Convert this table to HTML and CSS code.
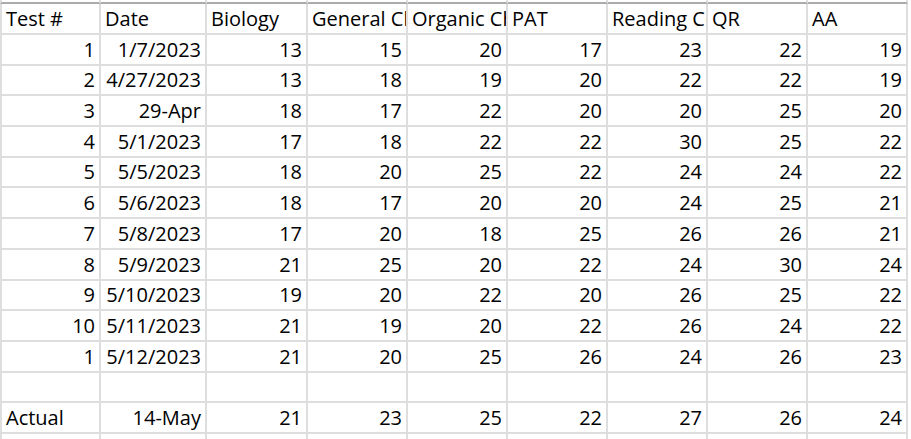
FILE: index.html
```html
<!DOCTYPE html>
<html>
<head>
<meta charset="utf-8">
<link rel="stylesheet" href="styles.css">
</head>
<body>
<div class="sheet">
  <div class="c top first"></div><div class="c top"></div><div class="c top"></div><div class="c top"></div><div class="c top"></div><div class="c top"></div><div class="c top"></div><div class="c top"></div><div class="c top"></div>

  <div class="c first l">Test #</div><div class="c l">Date</div><div class="c l">Biology</div><div class="c l">General Chemistry</div><div class="c l">Organic Chemistry</div><div class="c l">PAT</div><div class="c l">Reading Comprehension</div><div class="c l">QR</div><div class="c l">AA</div>

  <div class="c first r">1</div><div class="c r">1/7/2023</div><div class="c r">13</div><div class="c r">15</div><div class="c r">20</div><div class="c r">17</div><div class="c r">23</div><div class="c r">22</div><div class="c r">19</div>
  <div class="c first r">2</div><div class="c r">4/27/2023</div><div class="c r">13</div><div class="c r">18</div><div class="c r">19</div><div class="c r">20</div><div class="c r">22</div><div class="c r">22</div><div class="c r">19</div>
  <div class="c first r">3</div><div class="c r">29-Apr</div><div class="c r">18</div><div class="c r">17</div><div class="c r">22</div><div class="c r">20</div><div class="c r">20</div><div class="c r">25</div><div class="c r">20</div>
  <div class="c first r">4</div><div class="c r">5/1/2023</div><div class="c r">17</div><div class="c r">18</div><div class="c r">22</div><div class="c r">22</div><div class="c r">30</div><div class="c r">25</div><div class="c r">22</div>
  <div class="c first r">5</div><div class="c r">5/5/2023</div><div class="c r">18</div><div class="c r">20</div><div class="c r">25</div><div class="c r">22</div><div class="c r">24</div><div class="c r">24</div><div class="c r">22</div>
  <div class="c first r">6</div><div class="c r">5/6/2023</div><div class="c r">18</div><div class="c r">17</div><div class="c r">20</div><div class="c r">20</div><div class="c r">24</div><div class="c r">25</div><div class="c r">21</div>
  <div class="c first r">7</div><div class="c r">5/8/2023</div><div class="c r">17</div><div class="c r">20</div><div class="c r">18</div><div class="c r">25</div><div class="c r">26</div><div class="c r">26</div><div class="c r">21</div>
  <div class="c first r">8</div><div class="c r">5/9/2023</div><div class="c r">21</div><div class="c r">25</div><div class="c r">20</div><div class="c r">22</div><div class="c r">24</div><div class="c r">30</div><div class="c r">24</div>
  <div class="c first r">9</div><div class="c r">5/10/2023</div><div class="c r">19</div><div class="c r">20</div><div class="c r">22</div><div class="c r">20</div><div class="c r">26</div><div class="c r">25</div><div class="c r">22</div>
  <div class="c first r">10</div><div class="c r">5/11/2023</div><div class="c r">21</div><div class="c r">19</div><div class="c r">20</div><div class="c r">22</div><div class="c r">26</div><div class="c r">24</div><div class="c r">22</div>
  <div class="c first r">1</div><div class="c r">5/12/2023</div><div class="c r">21</div><div class="c r">20</div><div class="c r">25</div><div class="c r">26</div><div class="c r">24</div><div class="c r">26</div><div class="c r">23</div>

  <div class="c first"></div><div class="c"></div><div class="c"></div><div class="c"></div><div class="c"></div><div class="c"></div><div class="c"></div><div class="c"></div><div class="c"></div>

  <div class="c first l">Actual</div><div class="c r">14-May</div><div class="c r">21</div><div class="c r">23</div><div class="c r">25</div><div class="c r">22</div><div class="c r">27</div><div class="c r">26</div><div class="c r">24</div>

  <div class="c first"></div><div class="c"></div><div class="c"></div><div class="c"></div><div class="c"></div><div class="c"></div><div class="c"></div><div class="c"></div><div class="c"></div>
</div>
</body>
</html>
```

FILE: styles.css
```css
html, body {
  margin: 0;
  padding: 0;
  background: #ffffff;
  overflow: hidden;
}

.sheet {
  display: grid;
  grid-template-columns: 101px 106px 101px 100px 100px 100px 100px 100px 100px;
  grid-template-rows: 4px 31px repeat(13, 30.7px) 20px;
  font-family: "Open Sans", "Noto Sans", sans-serif;
  font-size: 20px;
  color: #000000;
}

.c {
  box-sizing: border-box;
  border-right: 2px solid #dedede;
  border-bottom: 2px solid #dedede;
  overflow: hidden;
  white-space: nowrap;
  display: flex;
  align-items: flex-end;
  line-height: 27px;
  padding-bottom: 1px;
}

.c.first {
  border-left: 2px solid #dedede;
}

.c.top {
  border-bottom: 2px solid #ababab;
  padding: 0;
}

.l {
  justify-content: flex-start;
  padding-left: 4px;
}

.r {
  justify-content: flex-end;
  padding-right: 4px;
}
```
